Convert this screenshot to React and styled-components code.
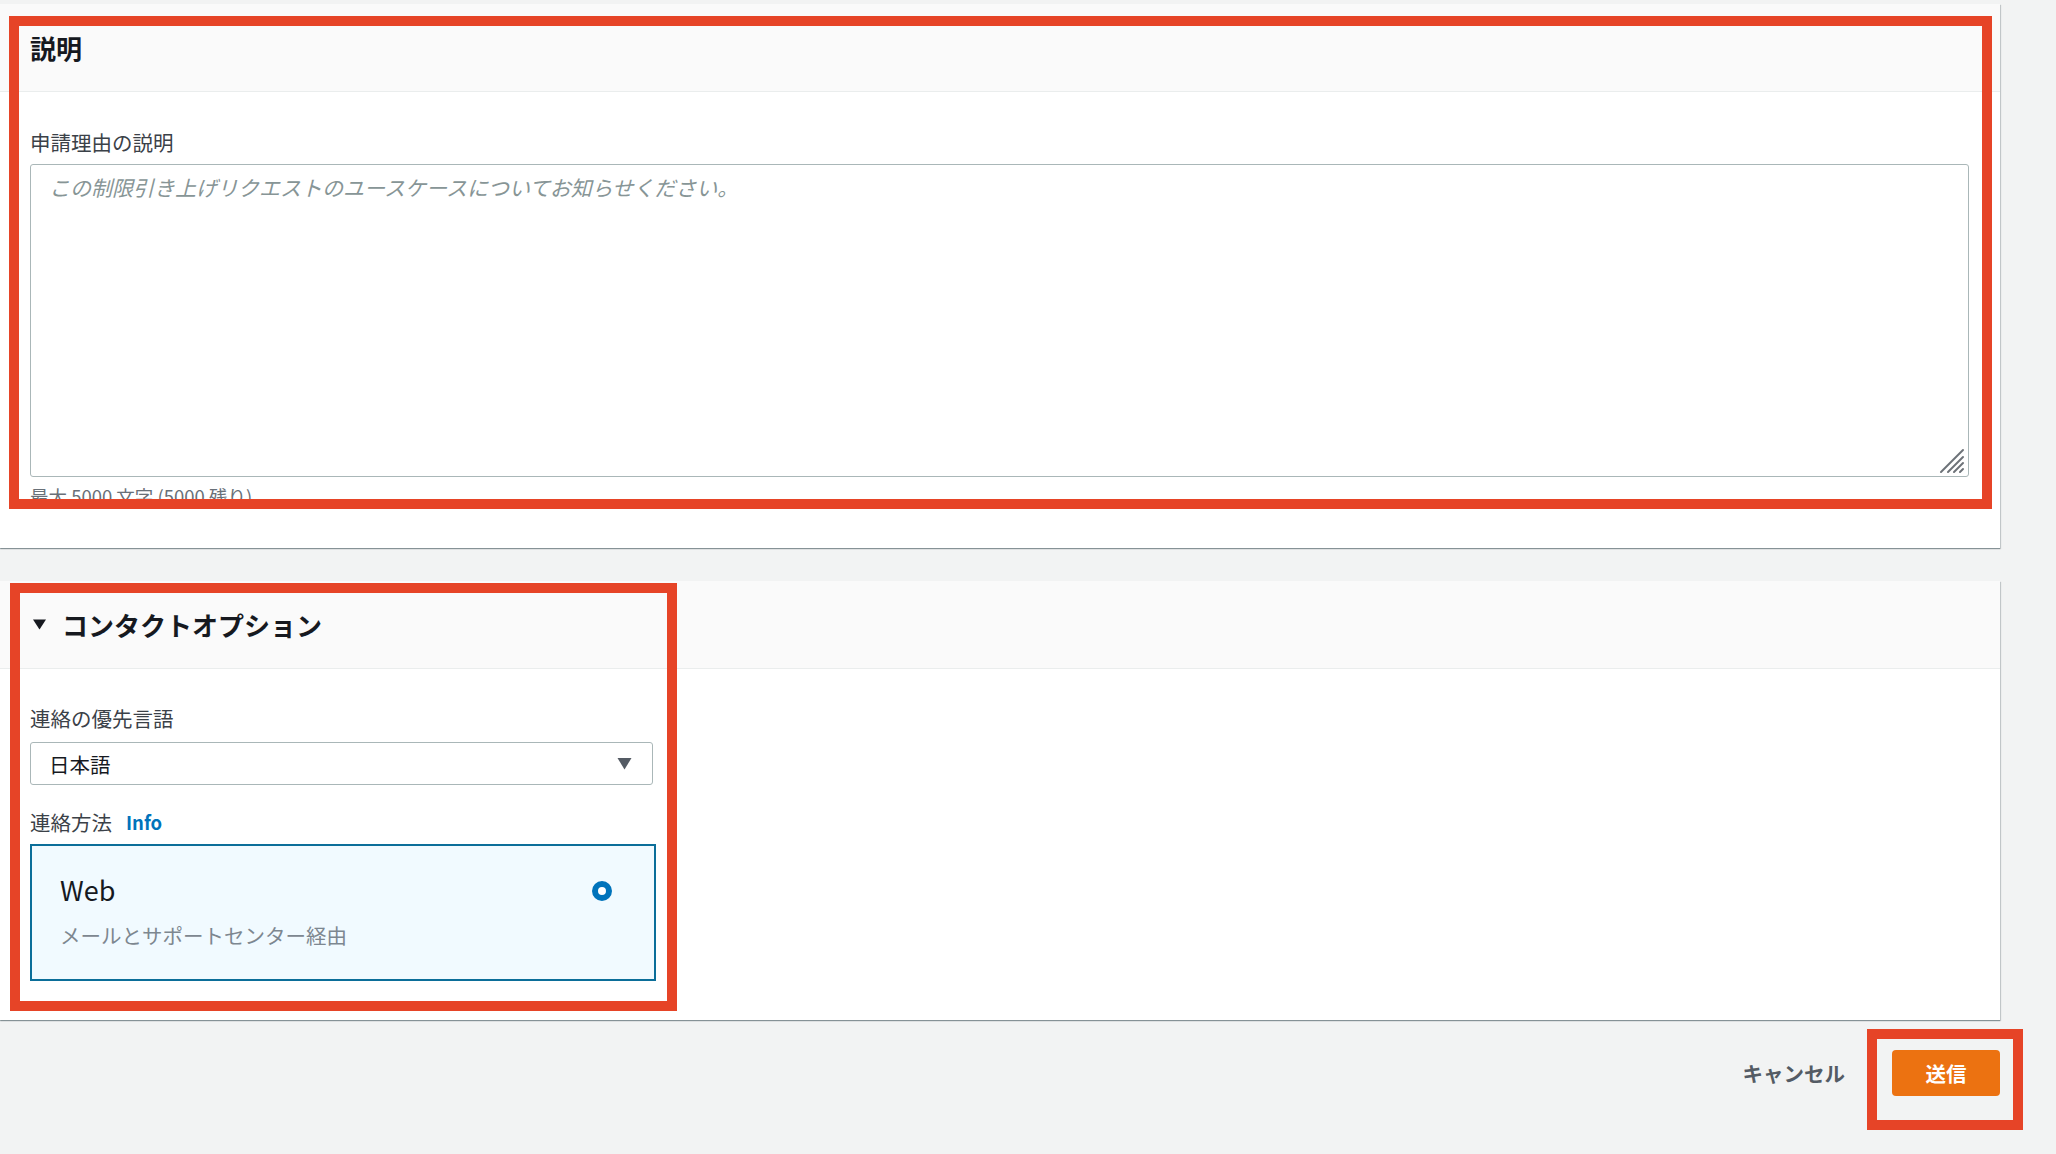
import styled, { createGlobalStyle } from 'styled-components';

const GlobalStyle = createGlobalStyle`
  html, body {
    margin: 0;
    padding: 0;
    background: #f2f3f3;
  }
  body {
    font-family: "Noto Sans CJK JP", "Noto Sans", sans-serif;
    color: #16191f;
  }
`;

const Page = styled.div`
  width: 2000px;
  padding: 4px 56px 40px 0;
  display: flex;
  flex-direction: column;
  gap: 33px;
`;

const Card = styled.section`
  position: relative;
  background: #fff;
  box-shadow: 0 1px 1px 0 rgba(0, 28, 36, 0.35), 1px 1px 1px 0 rgba(0, 28, 36, 0.15);
`;

const CardHeader = styled.header`
  height: 87px;
  display: flex;
  align-items: center;
  gap: 16px;
  padding-left: ${(p) => (p.$toggle ? '33px' : '30px')};
  background: #fafafa;
  border-bottom: 1px solid #eaeded;
`;

const Title = styled.h2`
  margin: 0;
  font-size: 26px;
  font-weight: 700;
  color: #16191f;
  line-height: 1;
`;

const CardBody = styled.div`
  display: flex;
  flex-direction: column;
  padding: ${(p) => p.$top}px 31px ${(p) => p.$bottom || 39}px 30px;
`;

const Label = styled.label`
  display: flex;
  align-items: center;
  gap: 14px;
  font-size: 20.5px;
  line-height: 28px;
  color: #3b4148;
  margin-bottom: ${(p) => p.$gap || 8}px;
  margin-top: ${(p) => p.$mt || 0}px;
`;

const InfoLink = styled.a`
  font-size: 18.5px;
  font-weight: 700;
  color: #0073bb;
  text-decoration: none;
`;

const TextAreaWrap = styled.div`
  position: relative;
  height: 313px;
`;

const TextArea = styled.textarea`
  box-sizing: border-box;
  display: block;
  width: 100%;
  height: 100%;
  padding: 8px 18px;
  border: 1px solid #aab7b8;
  border-radius: 3px;
  font-family: inherit;
  font-size: 21px;
  line-height: 28px;
  color: #16191f;
  resize: none;
  &::placeholder {
    color: #879596;
    font-style: italic;
  }
`;

const Grip = styled.svg`
  position: absolute;
  right: 4px;
  bottom: 3px;
  pointer-events: none;
`;

const Hint = styled.div`
  margin-top: 7px;
  font-size: 18.5px;
  line-height: 24px;
  color: #687078;
`;

const Select = styled.div`
  box-sizing: border-box;
  width: 623px;
  height: 43px;
  display: flex;
  align-items: center;
  justify-content: space-between;
  padding: 0 20px 0 18px;
  border: 1px solid #aab7b8;
  border-radius: 3px;
  font-size: 20.5px;
  color: #16191f;
`;

const Tile = styled.div`
  box-sizing: border-box;
  width: 626px;
  height: 137px;
  padding: 27px 42px 0 28px;
  border: 2px solid #0b6e99;
  background: #f1faff;
  display: flex;
  justify-content: space-between;
`;

const TileText = styled.div`
  display: flex;
  flex-direction: column;
  gap: 14px;
`;

const TileTitle = styled.div`
  font-size: 27px;
  line-height: 34px;
  color: #16191f;
`;

const TileDesc = styled.div`
  font-size: 20.5px;
  line-height: 28px;
  color: #7d8790;
`;

const Radio = styled.span`
  box-sizing: border-box;
  margin-top: 8px;
  width: 20px;
  height: 20px;
  border-radius: 50%;
  border: 6px solid #0073bb;
  background: #fff;
`;

const Footer = styled.div`
  display: flex;
  justify-content: flex-end;
  align-items: center;
  gap: 47px;
  margin-top: -3px;
`;

const LinkButton = styled.button`
  border: none;
  background: none;
  padding: 0;
  font-family: inherit;
  font-size: 20.5px;
  font-weight: 700;
  color: #545b64;
`;

const ButtonWrap = styled.div`
  position: relative;
`;

const PrimaryButton = styled.button`
  width: 108px;
  height: 46px;
  border: none;
  border-radius: 4px;
  background: #ec7211;
  color: #fff;
  font-family: inherit;
  font-size: 20.5px;
  font-weight: 700;
`;

// red annotation frames drawn over the screenshot
const Highlight = styled.div`
  position: absolute;
  box-sizing: border-box;
  border: 10px solid #e64427;
  pointer-events: none;
  top: ${(p) => p.$top}px;
  left: ${(p) => p.$left}px;
  width: ${(p) => p.$w}px;
  height: ${(p) => p.$h}px;
`;

const Caret = () => (
  <svg width="15" height="13" viewBox="0 0 15 13">
    <path d="M0.5 1 L14.5 1 L7.5 12.5 Z" fill="#545b64" />
  </svg>
);

const Toggle = () => (
  <svg width="13" height="11" viewBox="0 0 13 11">
    <path d="M0 0.5 L13 0.5 L6.5 10.5 Z" fill="#16191f" />
  </svg>
);

const App = () => {
  return (
    <>
      <GlobalStyle />
      <Page>
        <Card>
          <CardHeader>
            <Title>説明</Title>
          </CardHeader>
          <CardBody $top={36} $bottom={40}>
            <Label>申請理由の説明</Label>
            <TextAreaWrap>
              <TextArea placeholder="この制限引き上げリクエストのユースケースについてお知らせください。" />
              <Grip width="26" height="26" viewBox="0 0 26 26">
                <g stroke="#6d7278" strokeWidth="2" strokeLinecap="round">
                  <line x1="2" y1="24" x2="24" y2="2" />
                  <line x1="9" y1="24" x2="24" y2="9" />
                  <line x1="15" y1="24" x2="24" y2="15" />
                  <line x1="21" y1="24" x2="24" y2="21" />
                </g>
              </Grip>
            </TextAreaWrap>
            <Hint>最大 5000 文字 (5000 残り)</Hint>
          </CardBody>
          <Highlight $top={12} $left={9} $w={1983} $h={493} />
        </Card>

        <Card>
          <CardHeader $toggle>
            <Toggle />
            <Title>コンタクトオプション</Title>
          </CardHeader>
          <CardBody $top={35}>
            <Label $gap={10}>連絡の優先言語</Label>
            <Select>
              <span>日本語</span>
              <Caret />
            </Select>
            <Label $mt={23}>
              連絡方法
              <InfoLink>Info</InfoLink>
            </Label>
            <Tile>
              <TileText>
                <TileTitle>Web</TileTitle>
                <TileDesc>メールとサポートセンター経由</TileDesc>
              </TileText>
              <Radio />
            </Tile>
          </CardBody>
          <Highlight $top={2} $left={10} $w={667} $h={428} />
        </Card>

        <Footer>
          <LinkButton>キャンセル</LinkButton>
          <ButtonWrap>
            <PrimaryButton>送信</PrimaryButton>
            <Highlight $top={-21} $left={-25} $w={156} $h={101} />
          </ButtonWrap>
        </Footer>
      </Page>
    </>
  );
};

export default App;
